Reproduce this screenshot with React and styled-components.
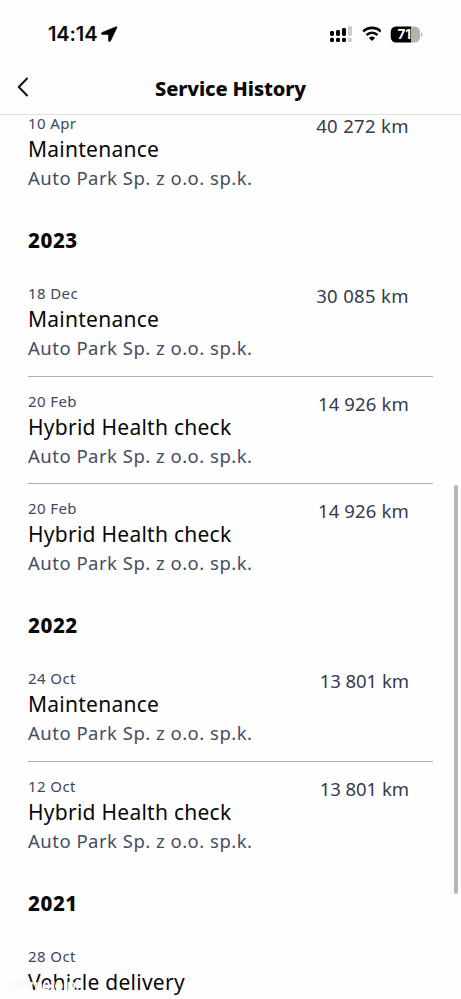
import React from "react";
import styled, { createGlobalStyle } from "styled-components";

const Global = createGlobalStyle`
  * { box-sizing: border-box; }
  body { margin: 0; background: #fefefe; overflow: hidden; }
`;
const Screen = styled.main`
  position: relative;
  display: flex;
  flex-direction: column;
  width: 461px;
  height: 999px;
  overflow: hidden;
  background: #fefefe;
  color: #080808;
  font-family: "Noto Sans", sans-serif;
  white-space: nowrap;
`;
const StatusBar = styled.div`
  display: flex;
  align-items: center;
  justify-content: space-between;
  height: 68px;
  padding: 0 38px 0 48px;
`;
const Clock = styled.div`
  display: flex;
  align-items: center;
  gap: 4px;
  font: 600 20px/24px Inter, sans-serif;
  letter-spacing: -0.1px;
`;
const StatusIcons = styled.div`
  display: flex;
  align-items: center;
  gap: 9px;
`;
const Header = styled.header`
  display: grid;
  grid-template-columns: 60px 1fr 60px;
  align-items: center;
  flex: none;
  height: 47px;
  padding-bottom: 4px;
  border-bottom: 1px solid #dedfdf;
`;
const Back = styled.button`
  display: flex;
  padding: 0 0 4px 16px;
  border: 0;
  background: none;
`;
const Title = styled.h1`
  margin: 0;
  text-align: center;
  font-size: 20px;
  line-height: 28px;
  font-weight: 800;
  letter-spacing: -0.1px;
`;
const Viewport = styled.div`
  flex: 1;
  min-height: 0;
  overflow: hidden;
`;
const List = styled.div`
  margin-top: -16px;
  padding: 0 28px;
`;
const Year = styled.h2`
  margin: 0;
  height: 63.3px;
  padding-top: 20px;
  font-size: 20.5px;
  line-height: 28px;
  font-weight: 800;
  letter-spacing: 0.6px;
`;
const Entry = styled.article`
  display: flex;
  justify-content: space-between;
  height: 107.2px;
  padding: 13px 24px 0 0;
  border-bottom: 1px solid ${(p) => (p.$divided ? "#a9adad" : "transparent")};
`;
const DateText = styled.div`
  font-size: 15px;
  line-height: 22px;
  color: #414757;
  letter-spacing: 0.4px;
`;
const Service = styled.div`
  padding-top: 1px;
  font-size: 21px;
  line-height: 28px;
  letter-spacing: 0.26px;
`;
const Dealer = styled.div`
  font-size: 18.5px;
  line-height: 29px;
  color: #454d60;
  letter-spacing: 0.49px;
`;
const Mileage = styled.div`
  padding-top: 1px;
  font-size: 18.5px;
  line-height: 26px;
  color: #343b4c;
  letter-spacing: ${(p) => p.$tracking}px;
`;
const ScrollThumb = styled.div`
  position: absolute;
  top: 485px;
  right: 3px;
  width: 4px;
  height: 409px;
  border-radius: 2px;
  background: #b7b7b7;
`;
const Watermark = styled.div`
  position: absolute;
  left: 9px;
  top: 976px;
  color: #fff;
  font: 400 15px/18px "Liberation Sans", sans-serif;
  text-shadow: 0 0 1px #ddd;
`;

const history = [
  { entries: [["10 Apr", "Maintenance", "40 272 km", 0.35]] },
  {
    year: 2023,
    entries: [
      ["18 Dec", "Maintenance", "30 085 km", 0.35],
      ["20 Feb", "Hybrid Health check", "14 926 km", 0.15],
      ["20 Feb", "Hybrid Health check", "14 926 km", 0.15],
    ],
  },
  {
    year: 2022,
    entries: [
      ["24 Oct", "Maintenance", "13 801 km", -0.05],
      ["12 Oct", "Hybrid Health check", "13 801 km", -0.05],
    ],
  },
  { year: 2021, entries: [["28 Oct", "Vehicle delivery", "", 0]] },
];

const LocationIcon = () => (
  <svg width="17" height="16" viewBox="0 0 17 16">
    <path d="M15 .8 1 6.500c-1 .5-.8 2 .4 2h6.100v6.100c0 1.200 1.500 1.400 2 .4L15.900 1.700c.3-.7-.2-1.200-.9-.9Z" stroke="#080808" strokeWidth=".6" />
  </svg>
);
const SignalIcon = () => (
  <svg width="24" height="18" viewBox="0 0 24 18">
    <rect x="2" y="6" width="4" height="5" rx="1.4" />
    <rect x="8" y="5" width="4" height="6" rx="1.4" />
    <rect x="14" y="3" width="4" height="8" rx="1.4" />
    <rect x="20" y="1" width="4" height="10" rx="1.4" fill="#ccc" />
    <rect x="2" y="12.8" width="4" height="4.2" rx="1.5" />
    <rect x="8" y="12.8" width="4" height="4.2" rx="1.5" />
    <rect x="14" y="12.8" width="4" height="4.2" rx="1.5" />
    <rect x="20" y="12.8" width="4" height="4.2" rx="1.5" fill="#ccc" />
  </svg>
);
const WifiIcon = () => (
  <svg width="20" height="16" viewBox="-1 0 20 16" fill="none" stroke="#080808" strokeWidth="2.6">
    <path d="M1.200 5.500a12.600 12.600 0 0 1 17.600 0M4.500 9a7.900 7.900 0 0 1 11 0" />
    <path d="m10 15-3.100-3.100a4.500 4.500 0 0 1 6.200 0Z" fill="#080808" stroke="none" />
  </svg>
);
const BatteryIcon = () => (
  <svg width="33" height="17" viewBox="0 0 33 17">
    <path d="M6 .5h15v16H6a5.300 5.300 0 0 1-5.300-5.300V5.800A5.300 5.300 0 0 1 6 .5Z" />
    <path d="M21 .5h3.700a5.300 5.300 0 0 1 5.300 5.300v5.400a5.300 5.300 0 0 1-5.300 5.300H21Z" fill="#b2b2b2" />
    <path d="M31 6.200c2 .8 2 3.800 0 4.600Z" fill="#b2b2b2" />
    <text x="7.500" y="13.200" fill="#fff" fontFamily="Inter, sans-serif" fontWeight="700" fontSize="13.500">71</text>
  </svg>
);

export default function App() {
  return (
    <Screen>
      <Global />
      <StatusBar>
        <Clock>14:14<LocationIcon /></Clock>
        <StatusIcons><SignalIcon /><WifiIcon /><BatteryIcon /></StatusIcons>
      </StatusBar>
      <Header>
        <Back aria-label="Back">
          <svg width="14" height="20" viewBox="0 0 14 20" fill="none" stroke="#111" strokeWidth="2">
            <path d="M11.500 1 2.800 10l8.700 9" />
          </svg>
        </Back>
        <Title>Service History</Title>
      </Header>
      <Viewport>
        <List>
          {history.map(({ year, entries }, g) => (
            <section key={g}>
              {year && <Year>{year}</Year>}
              {entries.map(([date, service, km, tracking], i) => (
                <Entry key={i} $divided={i < entries.length - 1}>
                  <div>
                    <DateText>{date}</DateText>
                    <Service>{service}</Service>
                    <Dealer>Auto Park Sp. z o.o. sp.k.</Dealer>
                  </div>
                  <Mileage $tracking={tracking}>{km}</Mileage>
                </Entry>
              ))}
            </section>
          ))}
        </List>
      </Viewport>
      <ScrollThumb />
      <Watermark>otomoto.pl</Watermark>
    </Screen>
  );
}
